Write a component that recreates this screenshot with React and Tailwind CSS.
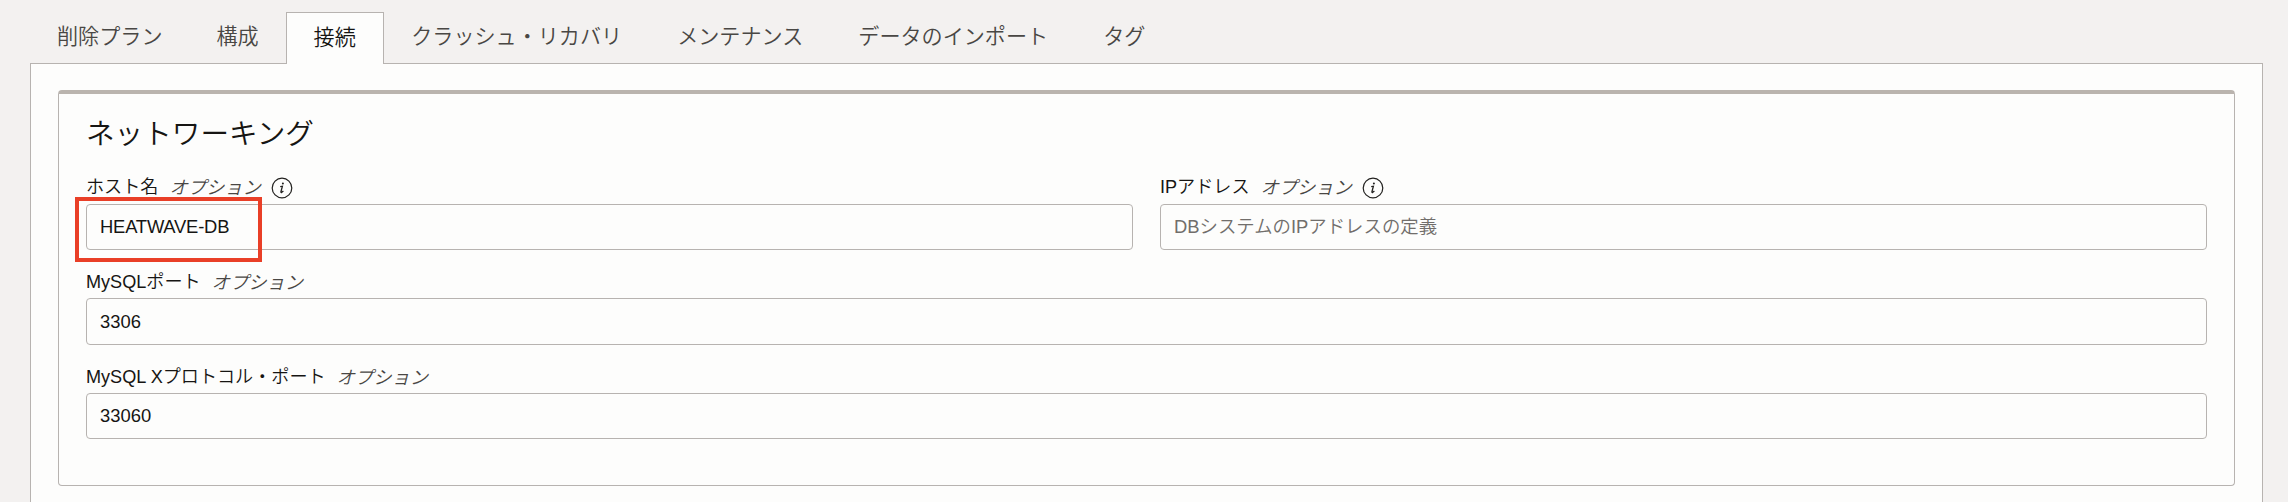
const TABS = [
  { label: '削除プラン', compact: true },
  { label: '構成', compact: true },
  { label: '接続', active: true },
  { label: 'クラッシュ・リカバリ' },
  { label: 'メンテナンス' },
  { label: 'データのインポート' },
  { label: 'タグ' },
];

function Tab({ label, active, compact }) {
  return (
    <button
      type="button"
      className={
        active
          ? 'flex h-[52px] w-[98px] shrink-0 items-center justify-center whitespace-nowrap border border-b-0 border-[#b7b3b0] bg-[#fdfdfc] pb-[2px] text-[21.1px] text-[#161513]'
          : (compact ? 'px-[27px]' : 'px-[27.5px]') +
            ' flex h-[52px] shrink-0 items-center whitespace-nowrap pb-[3px] text-[21.1px] text-[#494744]'
      }
    >
      {label}
    </button>
  );
}

function InfoIcon() {
  return (
    <svg viewBox="0 0 22 22" className="ml-[10px] size-[22px] shrink-0" fill="none" aria-hidden="true">
      <circle cx="11" cy="11" r="9.8" stroke="#22211f" strokeWidth="1.2" />
      <circle cx="11.9" cy="6.4" r="1" fill="#22211f" />
      <path d="M9.2 9.6 11.4 9.2 9.9 14.9Q9.8 15.8 10.8 15.3L12.4 14" stroke="#22211f" strokeWidth="1.3" />
    </svg>
  );
}

function Field({ label, value, placeholder, info, tall, marked }) {
  return (
    <div className="relative min-w-0 flex-1">
      <div
        className={
          (info ? 'pt-[2px]' : 'pt-[4px]') +
          ' flex h-[35px] items-center text-[18.3px] whitespace-nowrap'
        }
      >
        <span className="text-[18.1px] text-[#161513]">{label}</span>
        <span className="ml-[11px] text-[#494744] italic">オプション</span>
        {info && <InfoIcon />}
      </div>
      <input
        className={
          (tall ? 'h-[47px]' : 'h-[46px]') +
          (marked ? ' tracking-[-0.2px]' : '') +
          ' block w-full rounded-[4px] border border-[#b7b3b0] bg-transparent px-[13px] text-[18.4px] text-[#161513] placeholder:text-[#716e6b]'
        }
        defaultValue={value}
        placeholder={placeholder}
      />
      {marked && (
        <div className="absolute top-[28px] -left-[11px] h-[65px] w-[187px] border-4 border-[#e93f27]" />
      )}
    </div>
  );
}

export default function App() {
  return (
    <div className="h-[502px] overflow-hidden bg-[#f3f1f0] pt-3 pr-[25px] pl-[30px] font-['Liberation_Sans','Noto_Sans_CJK_JP',sans-serif] font-[350]">
      <nav className="relative z-10 -mb-px flex">
        {TABS.map((tab) => (
          <Tab key={tab.label} {...tab} />
        ))}
      </nav>
      <main className="h-[450px] border border-[#b7b3b0] bg-[#fdfdfc] px-[27px] pt-[26px]">
        <section className="h-[396px] rounded-[4px] border border-t-4 border-[#b7b3b0] border-t-[#bab4ae] px-[27px]">
          <h2 className="flex h-[75px] items-center pt-[5px] text-[28.6px] text-[#161513]">ネットワーキング</h2>
          <div className="flex gap-[27px]">
            <Field label="ホスト名" value="HEATWAVE-DB" info marked />
            <Field label="IPアドレス" placeholder="DBシステムのIPアドレスの定義" info />
          </div>
          <div className="mt-[13px] flex">
            <Field label="MySQLポート" value="3306" tall />
          </div>
          <div className="mt-[13px] flex">
            <Field label="MySQL Xプロトコル・ポート" value="33060" />
          </div>
        </section>
      </main>
    </div>
  );
}
